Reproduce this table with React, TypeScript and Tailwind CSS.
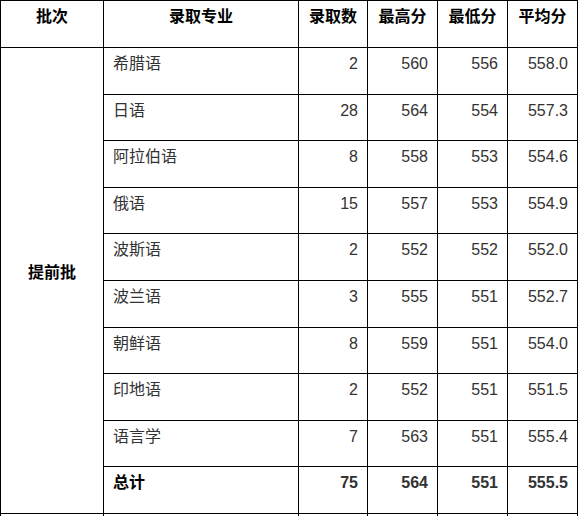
const rows: [string, number, number, number, string][] = [
  ["希腊语", 2, 560, 556, "558.0"],
  ["日语", 28, 564, 554, "557.3"],
  ["阿拉伯语", 8, 558, 553, "554.6"],
  ["俄语", 15, 557, 553, "554.9"],
  ["波斯语", 2, 552, 552, "552.0"],
  ["波兰语", 3, 555, 551, "552.7"],
  ["朝鲜语", 8, 559, 551, "554.0"],
  ["印地语", 2, 552, 551, "551.5"],
  ["语言学", 7, 563, 551, "555.4"],
];

const cjk = "font-['Liberation_Sans','Noto_Sans_CJK_SC',sans-serif]";
const cell = "border border-black align-top pt-[4px] px-[9px] text-[16px] leading-[24px]";

export default function App() {
  return (
    <div className={`bg-white w-[579px] h-[516px] overflow-hidden ${cjk}`}>
      <table className="w-[578px] table-fixed border-collapse">
        <colgroup>
          <col className="w-[103px]" />
          <col className="w-[195px]" />
          <col className="w-[69px]" />
          <col className="w-[70px]" />
          <col className="w-[70px]" />
          <col className="w-[70px]" />
        </colgroup>
        <thead>
          <tr className="h-[47px]">
            {["批次", "录取专业", "录取数", "最高分", "最低分", "平均分"].map((h) => (
              <th key={h} className={`${cell} text-center font-bold text-black`}>
                {h}
              </th>
            ))}
          </tr>
        </thead>
        <tbody className="text-[#333]">
          {rows.map((r, i) => (
            <tr key={r[0]} className="h-[46.6px]">
              {i === 0 && (
                <td
                  rowSpan={10}
                  className="border border-black align-middle text-center text-[16px] font-bold text-black pb-[14px]"
                >
                  提前批
                </td>
              )}
              <td className={`${cell} text-left`}>{r[0]}</td>
              <td className={`${cell} text-right`}>{r[1]}</td>
              <td className={`${cell} text-right`}>{r[2]}</td>
              <td className={`${cell} text-right`}>{r[3]}</td>
              <td className={`${cell} text-right`}>{r[4]}</td>
            </tr>
          ))}
          <tr className="h-[46.6px] font-bold">
            <td className={`${cell} text-left text-black`}>总计</td>
            <td className={`${cell} text-right`}>75</td>
            <td className={`${cell} text-right`}>564</td>
            <td className={`${cell} text-right`}>551</td>
            <td className={`${cell} text-right`}>555.5</td>
          </tr>
          <tr className="h-[20px]">
            <td className="border border-black" />
            <td className="border border-black" />
            <td className="border border-black" />
            <td className="border border-black" />
            <td className="border border-black" />
            <td className="border border-black" />
          </tr>
        </tbody>
      </table>
    </div>
  );
}
